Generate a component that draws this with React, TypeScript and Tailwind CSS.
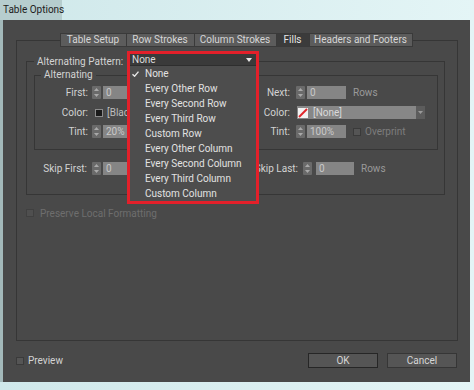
import React from "react";

const PATTERNS = [
  "None",
  "Every Other Row",
  "Every Second Row",
  "Every Third Row",
  "Custom Row",
  "Every Other Column",
  "Every Second Column",
  "Every Third Column",
  "Custom Column",
];

const TABS = [
  { label: "Table Setup", w: "w-[67px]" },
  { label: "Row Strokes", w: "w-[69px]" },
  { label: "Column Strokes", w: "w-[83px]" },
  { label: "Fills", w: "w-[34px]" },
  { label: "Headers and Footers", w: "w-[104px]" },
];

function Spinner() {
  return (
    <div className="flex h-[13px] w-[9px] flex-col items-center justify-between rounded-[1px] bg-[#6a6a6a] py-[2px]">
      <svg width="5" height="3" viewBox="0 0 5 3">
        <path d="M0 3L2.5 0L5 3Z" fill="#a9a9a9" />
      </svg>
      <svg width="5" height="3" viewBox="0 0 5 3">
        <path d="M0 0L5 0L2.5 3Z" fill="#a9a9a9" />
      </svg>
    </div>
  );
}

function Field({ value, w }: { value: string; w: string }) {
  return (
    <div className={`h-[13px] ${w} bg-[#858585] pl-[3px] text-[#c9c9c9] leading-[13px]`}>{value}</div>
  );
}

function Checkbox() {
  return <div className="h-[8px] w-[8px] border border-[#3a3a3a] bg-[#555555]" />;
}

export default function App() {
  return (
    <div className="relative h-[390px] w-[474px] overflow-hidden whitespace-nowrap bg-gradient-to-r from-[#cfe8ea] to-[#e4f5f6] font-['Roboto',sans-serif] text-[10px] text-[#d3d3d3]">
      {/* Title bar */}
      <div className="flex h-[20px]">
        <div className="w-[62px] bg-[#b6cdce] pl-[3px] leading-[20px] text-[#1c1c1c]">Table Options</div>
      </div>

      <div className="flex">
        <div className="w-[3px] bg-[#a3b9ba]" />
        {/* Dialog body */}
        <div className="flex h-[362px] w-[467px] flex-col bg-[#494949] px-[13px] pt-[13px]">
          {/* Tabs */}
          <div className="relative z-10 flex h-[14px] justify-center">
            {TABS.map((t) => (
              <div
                key={t.label}
                className={`${t.w} -ml-px border border-[#3a3a3a] text-center leading-[12px] ${
                  t.label === "Fills" ? "bg-[#3b3b3b] text-[#e6e6e6]" : "bg-[#5c5c5c] text-[#d6d6d6]"
                }`}
              >
                {t.label}
              </div>
            ))}
          </div>

          {/* Tab pane */}
          <div className="-mt-[7px] h-[301px] w-[442px] border border-[#363636] pt-[20px]">
            {/* Alternating Pattern group */}
            <div className="ml-[9px] h-[134px] w-[419px] border border-[#363636]">
              <div className="-mt-[7px] ml-[7px] flex h-[12px] w-fit items-center gap-[5px] bg-[#494949] px-[3px]">
                <span className="w-[86px]">Alternating Pattern:</span>
                <div className="h-[12px] w-[128px]" />
              </div>

              {/* Alternating sub-group */}
              <div className="ml-[7px] mt-[8px] h-[75px] w-[404px] border border-[#363636]">
                <div className="-mt-[7px] ml-[6px] h-[12px] w-fit bg-[#494949] px-[3px] leading-[12px]">Alternating</div>

                <div className="mt-[5px] flex h-[13px] items-center">
                  <div className="flex w-[201px] items-center">
                    <span className="w-[53px] text-right">First:</span>
                    <div className="ml-[4px]"><Spinner /></div>
                    <div className="ml-[2px]"><Field value="0" w="w-[40px]" /></div>
                  </div>
                  <div className="flex items-center">
                    <span className="w-[54px] text-right">Next:</span>
                    <div className="ml-[6px]"><Spinner /></div>
                    <div className="ml-[2px]"><Field value="0" w="w-[39px]" /></div>
                    <span className="ml-[7px] text-[#9a9a9a]">Rows</span>
                  </div>
                </div>

                <div className="mt-[7px] flex h-[13px] items-center">
                  <div className="flex w-[201px] items-center">
                    <span className="w-[53px] text-right">Color:</span>
                    <div className="ml-[7px] h-[8px] w-[8px] border border-[#8c8c8c] bg-[#1a1a1a]" />
                    <span className="ml-[4px] text-[#bdbdbd]">[Black]</span>
                  </div>
                  <div className="flex items-center">
                    <span className="w-[54px] text-right">Color:</span>
                    <div className="ml-[7px] flex h-[13px] w-[128px] items-center bg-[#878787]">
                      <svg width="10" height="10" viewBox="0 0 10 10" className="ml-[1px]">
                        <rect x="0" y="0" width="10" height="10" fill="#f2f2f2" />
                        <path d="M1 9L9 1" stroke="#e0262b" strokeWidth="2" />
                      </svg>
                      <span className="ml-[5px] flex-1 text-[#d9d9d9]">[None]</span>
                      <div className="flex h-[13px] w-[9px] items-center justify-center bg-[#5c5c5c]">
                        <svg width="5" height="3" viewBox="0 0 5 3">
                          <path d="M0 0L5 0L2.5 3Z" fill="#9a9a9a" />
                        </svg>
                      </div>
                    </div>
                  </div>
                </div>

                <div className="mt-[6px] flex h-[13px] items-center">
                  <div className="flex w-[201px] items-center">
                    <span className="w-[53px] text-right">Tint:</span>
                    <div className="ml-[4px]"><Spinner /></div>
                    <div className="ml-[2px]"><Field value="20%" w="w-[40px]" /></div>
                  </div>
                  <div className="flex items-center">
                    <span className="w-[54px] text-right">Tint:</span>
                    <div className="ml-[6px]"><Spinner /></div>
                    <div className="ml-[2px]"><Field value="100%" w="w-[39px]" /></div>
                    <div className="ml-[7px]"><Checkbox /></div>
                    <span className="ml-[4px] text-[#7d7d7d]">Overprint</span>
                  </div>
                </div>
              </div>

              {/* Skip row */}
              <div className="mt-[12px] flex h-[13px] items-center">
                <div className="flex w-[209px] items-center">
                  <span className="w-[60px] text-right">Skip First:</span>
                  <div className="ml-[5px]"><Spinner /></div>
                  <div className="ml-[2px]"><Field value="0" w="w-[40px]" /></div>
                </div>
                <div className="flex items-center">
                  <span className="w-[62px] text-right">Skip Last:</span>
                  <div className="ml-[5px]"><Spinner /></div>
                  <div className="ml-[4px]"><Field value="0" w="w-[38px]" /></div>
                  <span className="ml-[7px] text-[#9a9a9a]">Rows</span>
                </div>
              </div>
            </div>

            <div className="ml-[9px] mt-[12px] flex h-[12px] items-center">
              <div className="h-[8px] w-[8px] border border-[#404040] bg-[#4f4f4f]" />
              <span className="ml-[6px] text-[#6e6e6e]">Preserve Local Formatting</span>
            </div>
          </div>

          {/* Bottom row */}
          <div className="mt-[12px] flex h-[15px] items-center">
            <Checkbox />
            <span className="ml-[4px]">Preview</span>
            <div className="ml-auto flex gap-[9px]">
              <div className="flex h-[15px] w-[70px] items-center justify-center border border-[#262626] bg-[#555555] text-[#d6d6d6]">
                OK
              </div>
              <div className="flex h-[15px] w-[70px] items-center justify-center border border-[#363636] bg-[#555555] text-[#d6d6d6]">
                Cancel
              </div>
            </div>
          </div>
        </div>
      </div>

      {/* Open dropdown, highlighted */}
      <div className="absolute left-[127px] top-[51px] flex h-[153px] w-[132px] flex-col border-[3px] border-[#e3202a] bg-[#4d4d4d]">
        <div className="flex h-[12px] items-center border-b border-[#2e2e2e] bg-[#3a3a3a] pl-[2px] pr-[4px] text-[#dcdcdc]">
          <span className="flex-1">None</span>
          <svg width="6" height="4" viewBox="0 0 6 4">
            <path d="M0 0L6 0L3 4Z" fill="#e8e8e8" />
          </svg>
        </div>
        {PATTERNS.map((p, i) => (
          <div key={p} className="flex h-[15px] items-center text-[#e2e2e2]">
            <span className="w-[15px] pl-[2px]">
              {i === 0 && (
                <svg width="7" height="6" viewBox="0 0 7 6">
                  <path d="M0.5 3.2L2.6 5.2L6.5 0.6" stroke="#e8e8e8" strokeWidth="1.4" fill="none" />
                </svg>
              )}
            </span>
            <span>{p}</span>
          </div>
        ))}
      </div>
    </div>
  );
}
